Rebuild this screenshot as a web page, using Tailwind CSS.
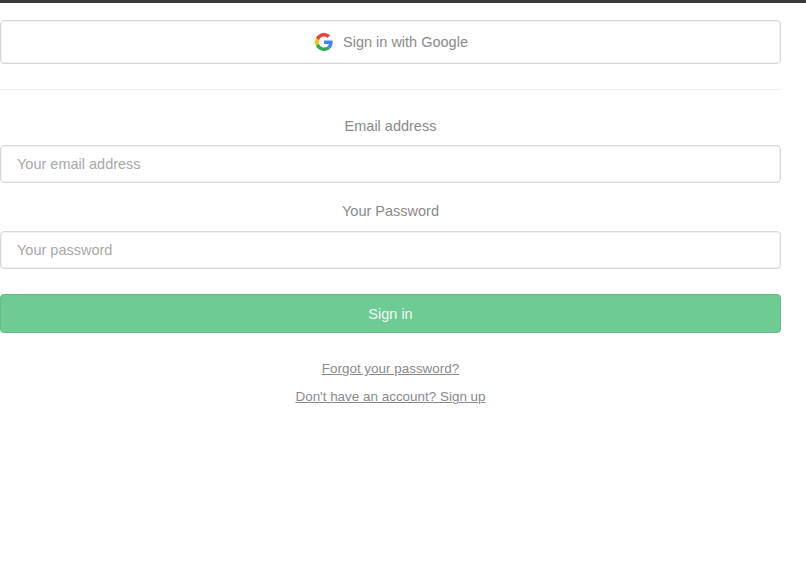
<!doctype html>
<html lang="en">
  <head>
    <meta charset="UTF-8" />
    <meta name="viewport" content="width=device-width, initial-scale=1.0" />
    <title>Sign in</title>
    <script src="https://cdn.jsdelivr.net/npm/@tailwindcss/browser@4"></script>
  </head>
  <body class="bg-white font-['Liberation_Sans',Arial,sans-serif] text-[14.5px] text-[#8a8a8a] min-h-screen">
    <div class="h-[3px] bg-[#3a3a3a]"></div>
    <div class="w-[781px] pt-[17px]">
      <!-- Google button -->
      <button class="w-full h-[44px] flex items-center justify-center gap-[10px] pl-[2px] bg-white border border-[#d8d8d8] shadow-[inset_0_0_0_1px_#f2f2f2] rounded-[4px] text-[#8a8a8a]">
        <svg class="w-[18px] h-[18px]" viewBox="0 0 48 48">
          <path fill="#EA4335" d="M24 9.5c3.54 0 6.71 1.22 9.21 3.6l6.85-6.85C35.9 2.38 30.47 0 24 0 14.62 0 6.51 5.38 2.56 13.22l7.98 6.19C12.43 13.72 17.74 9.5 24 9.5z" />
          <path fill="#4285F4" d="M46.98 24.55c0-1.57-.15-3.09-.38-4.55H24v9.02h12.94c-.58 2.96-2.26 5.48-4.78 7.18l7.73 6c4.51-4.18 7.09-10.36 7.09-17.65z" />
          <path fill="#FBBC05" d="M10.53 28.59c-.48-1.45-.76-2.99-.76-4.59s.27-3.14.76-4.59l-7.98-6.19C.92 16.46 0 20.12 0 24c0 3.88.92 7.54 2.56 10.78l7.97-6.19z" />
          <path fill="#34A853" d="M24 48c6.48 0 11.93-2.13 15.89-5.81l-7.73-6c-2.15 1.45-4.92 2.3-8.16 2.3-6.26 0-11.57-4.22-13.47-9.91l-7.98 6.19C6.51 42.62 14.62 48 24 48z" />
        </svg>
        <span class="pt-px">Sign in with Google</span>
      </button>

      <hr class="mt-[25px] border-t border-[#efefef]" />

      <!-- Sign in form -->
      <form class="mt-[26px]">
        <label class="block text-center leading-[20px]">Email address</label>
        <input type="text" placeholder="Your email address" class="mt-[9px] block w-full h-[38px] px-4 border border-[#d8d8d8] shadow-[inset_0_0_0_1px_#f2f2f2] rounded-[4px] placeholder:text-[#a8a8a8] outline-none" />
        <label class="block text-center leading-[20px] mt-[18px]">Your Password</label>
        <input type="password" placeholder="Your password" class="mt-[10px] block w-full h-[38px] px-4 border border-[#d8d8d8] shadow-[inset_0_0_0_1px_#f2f2f2] rounded-[4px] placeholder:text-[#a8a8a8] outline-none" />
        <button type="submit" class="mt-[25px] block w-full h-[39px] pt-[3px] bg-[#6ecb93] border border-[#66b98a] rounded-[4px] text-[#f1fbf5]">Sign in</button>
      </form>

      <!-- Links -->
      <div class="mt-[26px] flex flex-col items-center gap-[8px] leading-[20px] text-[13.45px]">
        <a href="#" class="underline">Forgot your password?</a>
        <a href="#" class="underline">Don't have an account? Sign up</a>
      </div>
    </div>
  </body>
</html>
